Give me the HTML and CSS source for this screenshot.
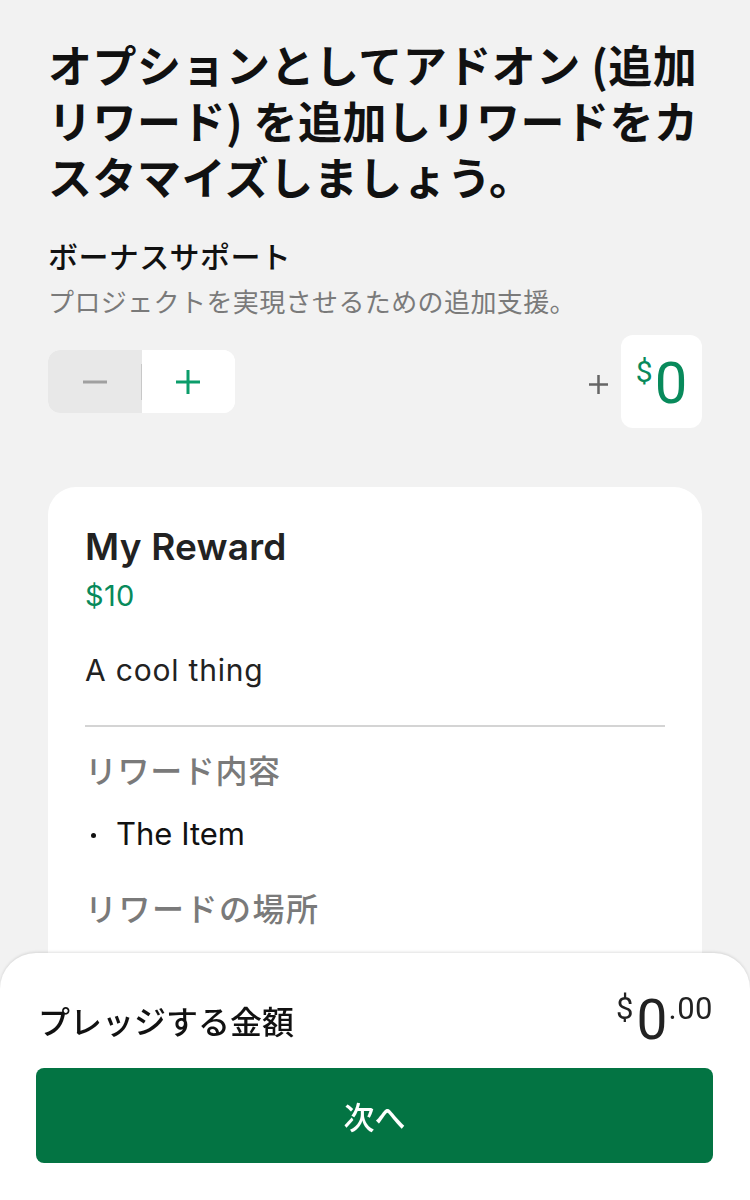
FILE: index.html
```html
<!DOCTYPE html>
<html lang="ja">
<head>
<meta charset="utf-8">
<link rel="stylesheet" href="styles.css">
</head>
<body>
<main class="page">
  <h1 class="title">オプションとしてアドオン (追加リワード) を追加しリワードをカスタマイズしましょう。</h1>
  <h2 class="bonus-title">ボーナスサポート</h2>
  <p class="bonus-sub">プロジェクトを実現させるための追加支援。</p>
  <div class="bonus-row">
    <div class="stepper">
      <div class="step step-minus">
        <svg width="24" height="4" viewBox="0 0 24 4"><rect x="0" y="0.5" width="24" height="3" fill="#a0a0a0"/></svg>
      </div>
      <div class="step-sep"></div>
      <div class="step step-plus">
        <svg width="24" height="24" viewBox="0 0 24 24"><rect x="0" y="10.5" width="24" height="3" fill="#0b9d6b"/><rect x="10.5" y="0" width="3" height="24" fill="#0b9d6b"/></svg>
      </div>
    </div>
    <div class="amount">
      <svg class="amount-plus" width="19" height="19" viewBox="0 0 19 19"><rect x="0" y="8.25" width="19" height="2.5" fill="#666"/><rect x="8.25" y="0" width="2.5" height="19" fill="#666"/></svg>
      <div class="amount-box"><span class="amount-cur">$</span><span class="amount-val">0</span></div>
    </div>
  </div>
  <section class="card">
    <h3 class="card-title">My Reward</h3>
    <div class="card-price">$10</div>
    <p class="card-desc">A cool thing</p>
    <hr class="card-divider">
    <h4 class="card-label">リワード内容</h4>
    <ul class="card-list"><li>The Item</li></ul>
    <h4 class="card-label card-label-2">リワードの場所</h4>
  </section>
</main>
<footer class="sheet">
  <div class="sheet-row">
    <span class="sheet-label">プレッジする金額</span>
    <span class="sheet-total"><span class="tot-cur">$</span><span class="tot-int">0</span><span class="tot-dec">.00</span></span>
  </div>
  <button class="next-btn">次へ</button>
</footer>
</body>
</html>
```

FILE: styles.css
```css
* { box-sizing: border-box; }
html, body { margin: 0; padding: 0; }
body {
  background: #f2f2f2;
  font-family: "Inter", "Noto Sans CJK JP", sans-serif;
  color: #222;
  width: 750px;
  height: 1200px;
  overflow: hidden;
}
.page {
  padding: 36px 48px 0;
}
.title {
  margin: 0;
  font-family: "Noto Sans CJK JP", sans-serif;
  font-size: 44px;
  line-height: 56px;
  font-weight: 700;
  letter-spacing: 0.5px;
  color: #111;
}
.bonus-title {
  margin: 33px 0 0;
  font-family: "Noto Sans CJK JP", sans-serif;
  font-size: 30px;
  line-height: 36px;
  font-weight: 500;
  letter-spacing: 0.4px;
  color: #111;
}
.bonus-sub {
  margin: 12px 0 0;
  font-family: "Noto Sans CJK JP", sans-serif;
  font-size: 26px;
  line-height: 32px;
  letter-spacing: 0.4px;
  color: #7a7a7a;
}
.bonus-row {
  margin-top: 18px;
  display: flex;
  align-items: center;
  justify-content: space-between;
}
.stepper {
  display: flex;
  align-items: center;
  width: 187px;
  height: 63px;
  border-radius: 12px;
  overflow: hidden;
  background: #fff;
}
.step {
  flex: 1;
  height: 100%;
  display: flex;
  align-items: center;
  justify-content: center;
}
.step-minus { background: #e8e8e8; }
.step-sep {
  width: 1px;
  height: 36px;
  background: #c8c8c8;
  margin-left: -1px;
  position: relative;
}
.step-plus { background: #fff; }
.amount {
  display: flex;
  align-items: center;
  gap: 13px;
}
.amount-plus {
  display: block;
  margin-top: 6px;
}
.amount-box {
  width: 81px;
  height: 93px;
  background: #fff;
  border-radius: 12px;
  display: flex;
  align-items: flex-start;
  justify-content: center;
  padding-top: 20px;
  color: #088a5b;
}
.amount-cur {
  font-size: 30px;
  line-height: 34px;
  font-family: "Roboto", sans-serif;
}
.amount-val {
  font-size: 58px;
  line-height: 56px;
  font-family: "Roboto", sans-serif;
  margin-left: 2px;
}
.card {
  margin-top: 59px;
  background: #fff;
  border-radius: 28px;
  padding: 38px 37px 400px;
}
.card-title {
  margin: 0;
  font-size: 37px;
  line-height: 44px;
  font-weight: 600;
  letter-spacing: 0.2px;
  color: #222;
}
.card-price {
  margin-top: 10px;
  font-size: 29px;
  line-height: 34px;
  letter-spacing: 0.3px;
  color: #088a5b;
}
.card-desc {
  margin: 37px 0 0;
  font-size: 30px;
  line-height: 40px;
  letter-spacing: 0.8px;
  color: #222;
}
.card-divider {
  margin: 35px 0 0;
  border: 0;
  height: 2px;
  background: #d4d4d4;
}
.card-label {
  margin: 22px 0 0;
  font-family: "Noto Sans CJK JP", sans-serif;
  font-size: 32px;
  line-height: 40px;
  font-weight: 500;
  letter-spacing: 0.6px;
  color: #7a7a7a;
}
.card-label-2 { margin-top: 33px; letter-spacing: 1.5px; }
.card-list {
  margin: 25px 0 0;
  padding: 0;
  list-style: none;
  font-size: 31px;
  line-height: 40px;
  color: #111;
}
.card-list li {
  display: flex;
  align-items: center;
}
.card-list li::before {
  content: "";
  width: 5px;
  height: 5px;
  border-radius: 50%;
  background: #111;
  margin: 2px 20px 0 6px;
}
.sheet {
  position: fixed;
  left: 0;
  right: 0;
  bottom: 0;
  height: 247px;
  background: #fff;
  border-radius: 36px 36px 0 0;
  box-shadow: 0 -1px 3px rgba(0,0,0,0.12);
  padding: 42px 37px 37px 36px;
  display: flex;
  flex-direction: column;
}
.sheet-row {
  display: flex;
  align-items: center;
  justify-content: space-between;
  height: 50px;
}
.sheet-label {
  font-family: "Noto Sans CJK JP", sans-serif;
  font-size: 32px;
  font-weight: 500;
  color: #111;
  padding-left: 2px;
  margin-top: 0;
}
.sheet-total {
  display: flex;
  align-items: flex-start;
  font-family: "Roboto", sans-serif;
  color: #222;
}
.tot-cur { font-size: 31px; line-height: 36px; }
.tot-int { font-size: 55px; line-height: 58px; margin: 0 1px 0 3px; }
.tot-dec { font-size: 31px; line-height: 36px; letter-spacing: 0.5px; }
.next-btn {
  margin-top: 23px;
  height: 95px;
  border: 0;
  border-radius: 8px;
  background: #037443;
  color: #fff;
  font-family: "Noto Sans CJK JP", sans-serif;
  font-size: 31px;
  font-weight: 500;
  width: 100%;
}
```
